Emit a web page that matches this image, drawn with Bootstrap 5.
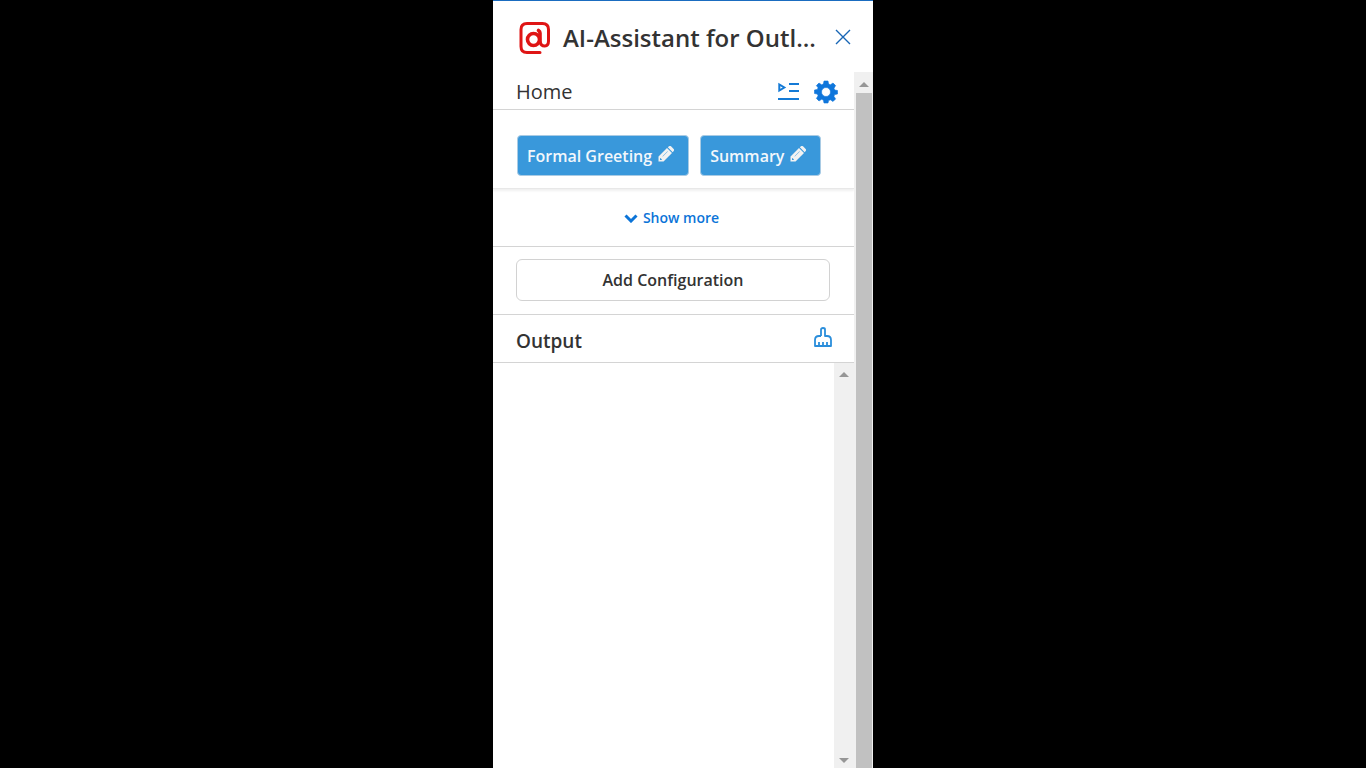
<!DOCTYPE html>
<html lang="en">
<head>
<meta charset="utf-8">
<meta name="viewport" content="width=device-width, initial-scale=1">
<title>AI-Assistant for Outlook</title>
<link href="https://cdn.jsdelivr.net/npm/bootstrap@5.3.0/dist/css/bootstrap.min.css" rel="stylesheet">
<style>
body { background: #000; color: #333; font-family: "Open Sans", "Noto Sans", sans-serif; }
svg { display: block; flex: none; }
.task-pane { width: 100%; max-width: 380px; background: #fff; border-top: 1px solid #1a6cc0; }
.pane-head { height: 71px; padding: 2px 21px 0 26px; }
.pane-title { font-size: 24px; line-height: 32px; font-weight: 600; }
.rule { border-bottom: 1px solid #d4d4d4; }
.home-row { height: 38px; padding: 2px 16px 0 23px; }
.home-title { font-size: 20px; line-height: 28px; }
.plain { background: none; border: 0; padding: 0; }
.preset-row { height: 79px; padding: 12px 24px 0; border-bottom: 1px solid #e8e8e8; box-shadow: 0 2px 2px #f0f0f0; gap: 11px; }
.preset { height: 41px; background: #3998db; border: 1px solid #a9cbe4; border-radius: 4px; color: #f2f7fb; font-size: 16px; line-height: 24px; font-weight: 600; padding: 2px 14px 0 9px; gap: 6px; white-space: nowrap; }
.preset:hover { background: #2c88ca; color: #fff; }
.preset svg { margin-bottom: 4px; }
.more-row { height: 58px; padding-right: 4px; }
.more { color: #0b74d8; font-size: 14px; line-height: 20px; font-weight: 600; gap: 5px; }
.add-row { height: 68px; padding: 0 24px 2px 23px; }
.add { height: 42px; border: 1px solid #d2d2d2; border-radius: 6px; font-size: 16px; font-weight: 600; color: #333; }
.out-head { height: 48px; padding: 4px 22px 0 23px; }
.out-title { font-size: 19px; line-height: 28px; font-weight: 600; }
.output { border: 0; resize: none; outline: 0; overflow: hidden; min-width: 0; }
.track { background: #f0f0f0; flex: none; }
.track-outer { width: 19px; }
.track-inner { width: 20px; padding: 9px 0 5px; }
.thumb { background: #c1c1c1; margin: 0 1px 0 2px; }
.arrow-box { height: 21px; padding-top: 3px; }
</style>
</head>
<body>
<main class="task-pane mx-auto vh-100 d-flex flex-column overflow-hidden">
  <header class="pane-head d-flex align-items-center">
    <svg width="32" height="34" viewBox="0 0 32 34" fill="none" stroke="#df1515" stroke-width="3" stroke-linecap="round" stroke-linejoin="round" aria-hidden="true">
      <path d="M21 31.500H8Q2 31.500 2 25.500V8.500Q2 2.500 8 2.500h15.500q6 0 6 6V20c0 6.500-7 6.500-8.500 1"/>
      <circle cx="14.500" cy="18.500" r="6" stroke-width="3.600"/><path d="M21 21v-9q0-1.500-1.500-2.500" stroke-width="3.600"/>
    </svg>
    <h1 class="pane-title mb-0 ms-2 ps-1 flex-grow-1 text-nowrap">AI-Assistant for Outl...</h1>
    <button class="plain" type="button" aria-label="Close">
      <svg width="18" height="18" viewBox="0 0 18 18" stroke="#1765b5" stroke-width="1.400"><path d="M2 1l14 14M16 1L2 15"/></svg>
    </button>
  </header>
  <div class="d-flex flex-grow-1 overflow-hidden">
    <div class="d-flex flex-column flex-grow-1 overflow-hidden">
      <div class="home-row rule d-flex align-items-center">
        <h2 class="home-title mb-0 me-auto fw-normal">Home</h2>
        <button class="plain me-2 pe-1" type="button" aria-label="Run prompt list">
          <svg width="24" height="20" viewBox="0 0 24 20" fill="none" stroke="#147ad6" stroke-width="2"><path d="M11 2h10M11 9h10M0 17h21M1.300 2.500v6l5-3z"/></svg>
        </button>
        <button class="plain" type="button" aria-label="Settings">
          <svg width="24" height="24" viewBox="0 0 24 24" fill="#0f76db" stroke="#0f76db" stroke-width=".6" stroke-linejoin="round"><path fill-rule="evenodd" d="M10 1h4l.6 3 1.800.8L19 3l2.600 2.600L20 8.300l.7 1.700 2.800.5v3.500l-2.800.6-.8 1.700 1.700 2.600-2.600 2.600-2.600-1.700-1.800.8L14 23h-4l-.6-2.900-1.800-.8L5 21l-2.600-2.600 1.700-2.600-.8-1.700-2.800-.6V10l2.800-.5.8-1.700L2.400 5.600 5 3l2.600 1.800L9.400 4zM12 7.500a4.500 4.500 0 1 0 0 9A4.500 4.500 0 0 0 12 7.500z"/></svg>
        </button>
      </div>
      <div class="preset-row d-flex align-items-center">
        <button class="preset btn d-flex align-items-center" type="button">Formal Greeting
          <svg width="16" height="16" viewBox="0 0 16 16" fill="#f2f2f2"><path fill-rule="evenodd" d="M.5 10.500L9 2l5 5-8.500 8.500h-5zM2 12.500V14h1.500l.5-.5L2.500 12zM4.500 10.300l5-5 .3.3-5 5zM9.800 1.300L11 .3q1-.7 2 0L15.700 3q.7 1 0 2l-1 1.200z"/></svg>
        </button>
        <button class="preset btn d-flex align-items-center" type="button">Summary
          <svg width="16" height="16" viewBox="0 0 16 16" fill="#f2f2f2"><path fill-rule="evenodd" d="M.5 10.500L9 2l5 5-8.500 8.500h-5zM2 12.500V14h1.500l.5-.5L2.500 12zM4.500 10.300l5-5 .3.3-5 5zM9.800 1.300L11 .3q1-.7 2 0L15.700 3q.7 1 0 2l-1 1.200z"/></svg>
        </button>
      </div>
      <div class="more-row rule d-flex align-items-center justify-content-center">
        <button class="plain more d-flex align-items-center" type="button">
          <svg width="14" height="10" viewBox="0 0 14 10" fill="none" stroke="#0b74d8" stroke-width="3"><path d="M1.500 2.500L7 8l5.500-5.500"/></svg>Show more
        </button>
      </div>
      <div class="add-row rule d-flex align-items-center">
        <button class="btn add w-100 py-0" type="button">Add Configuration</button>
      </div>
      <div class="out-head rule d-flex align-items-center">
        <label class="out-title me-auto" for="output">Output</label>
        <button class="plain mb-2" type="button" aria-label="Clear output">
          <svg width="18" height="22" viewBox="0 0 18 22" fill="none" stroke="#2b8edb" stroke-width="1.800" stroke-linejoin="round"><path d="M7 10V3.500q0-1.500 2-1.500t2 1.500V10h2q4 0 4 4v6H1v-6q0-4 4-4h2M5 20v-4M9 20v-4M13 20v-4"/></svg>
        </button>
      </div>
      <div class="d-flex flex-grow-1">
        <textarea class="output flex-grow-1" id="output" readonly></textarea>
        <div class="track track-inner d-flex flex-column justify-content-between align-items-center" aria-hidden="true">
          <svg width="10" height="5" viewBox="0 0 10 5" fill="#969696"><path d="M5 0l5 5H0z"/></svg>
          <svg width="10" height="5" viewBox="0 0 10 5" fill="#969696"><path d="M5 5l5-5H0z"/></svg>
        </div>
      </div>
    </div>
    <div class="track track-outer d-flex flex-column" aria-hidden="true">
      <div class="arrow-box d-flex align-items-center justify-content-center">
        <svg width="10" height="5" viewBox="0 0 10 5" fill="#969696"><path d="M5 0l5 5H0z"/></svg>
      </div>
      <div class="thumb flex-grow-1"></div>
    </div>
  </div>
</main>
<script src="https://cdn.jsdelivr.net/npm/bootstrap@5.3.0/dist/js/bootstrap.bundle.min.js"></script>
</body>
</html>
